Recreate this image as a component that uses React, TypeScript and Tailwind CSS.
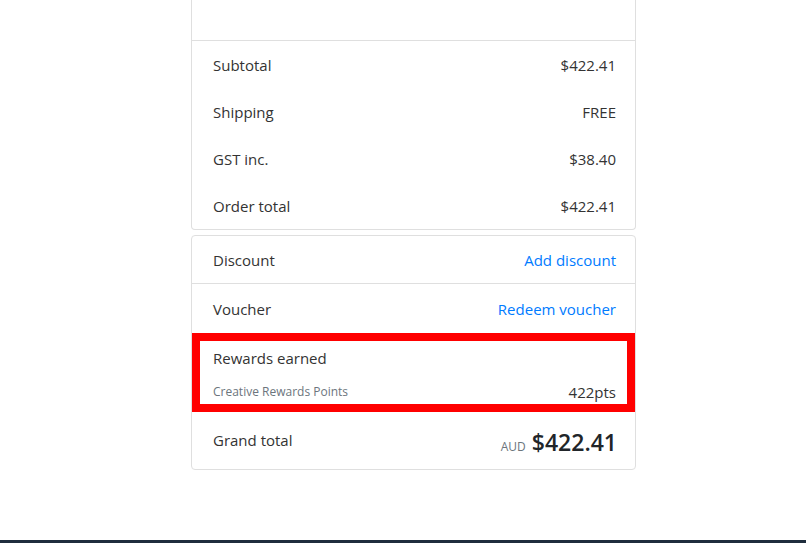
import React from "react";

const rows = [
  { label: "Subtotal", value: "$422.41" },
  { label: "Shipping", value: "FREE" },
  { label: "GST inc.", value: "$38.40" },
  { label: "Order total", value: "$422.41" },
];

export default function App() {
  return (
    <div
      className="relative h-[543px] w-[806px] overflow-hidden bg-white text-[15px] text-[#333]"
      style={{ fontFamily: '"Open Sans", "Noto Sans", sans-serif' }}
    >
      <div className="ml-[191px] w-[445px]">
        {/* order summary */}
        <div className="rounded-b border border-t-0 border-[#dfdfdf]">
          <div className="h-[41px] border-b border-[#dfdfdf]" />
          {rows.map((r) => (
            <div key={r.label} className="flex h-[47px] items-center justify-between pl-[21px] pr-[19px] pt-[2px]">
              <span>{r.label}</span>
              <span>{r.value}</span>
            </div>
          ))}
        </div>

        {/* discounts and totals */}
        <div className="mt-[5px] rounded border border-[#dfdfdf]">
          <div className="flex h-[48px] items-center justify-between border-b border-[#dfdfdf] pl-[21px] pr-[19px] pt-[1px]">
            <span>Discount</span>
            <a className="text-[#007bff]">Add discount</a>
          </div>
          <div className="flex h-[49px] items-center justify-between pl-[21px] pr-[19px] pt-[1px]">
            <span>Voucher</span>
            <a className="text-[#007bff]">Redeem voucher</a>
          </div>
          <div className="flex h-[79px] flex-col justify-center gap-[12px] pl-[21px] pr-[19px] pt-[5px] outline-8 outline-[#ff0000] -outline-offset-8">
            <span>Rewards earned</span>
            <div className="flex items-center justify-between">
              <span className="text-[12px] text-[#6c757d]">Creative Rewards Points</span>
              <span>422pts</span>
            </div>
          </div>
          <div className="flex h-[57px] items-center justify-between pl-[21px] pr-[18px] pt-[3px]">
            <span className="-mt-[4px]">Grand total</span>
            <span className="flex items-baseline gap-[6px]">
              <span className="text-[12px] text-[#6c757d]">AUD</span>
              <span className="text-[23px] font-semibold text-[#212529]">$422.41</span>
            </span>
          </div>
        </div>
      </div>
      <div className="absolute bottom-0 left-0 h-[3px] w-full bg-[#1f2d3d]" />
    </div>
  );
}
